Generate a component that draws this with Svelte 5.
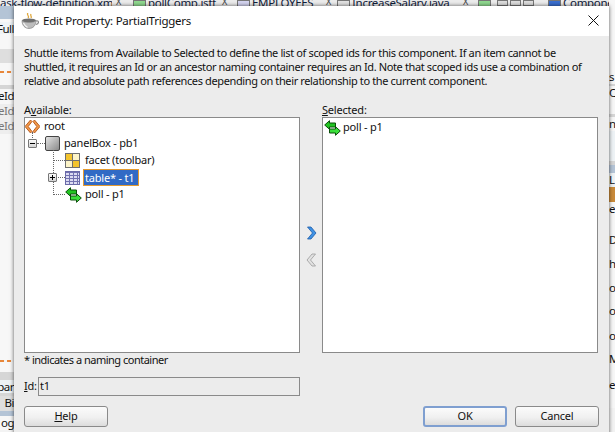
<script>
  const leftRows = [
    { h: 6, c: 'plain' }, { h: 13, c: 'steel' }, { h: 3, c: 'white' },
    { h: 12, c: 'pale', t: 'Full' }, { h: 15, c: 'white' },
    { h: 14, c: 'boxed' }, { h: 8, c: 'white' }, { h: 2, c: 'dash' },
    { h: 12, c: 'white' }, { h: 4, c: 'rule' },
    { h: 15, c: 'white', t: 'eId' }, { h: 15, c: 'fade', t: 'eId' }, { h: 15, c: 'fade', t: 'eId' },
    { h: 226, c: 'white' }, { h: 2, c: 'dash' }, { h: 10, c: 'white' },
    { h: 8, c: 'rule' }, { h: 13, c: 'pale', t: 'par' }, { h: 3, c: 'rule' },
    { h: 15, c: 'boxed', t: 'Bi' }, { h: 5, c: 'steel' }, { h: 14, c: 'white', t: 'og' }
  ];
  const rightRows = [
    { h: 70, c: 'white' }, { h: 14, c: 'white', t: 's' }, { h: 2, c: 'rule' }, { h: 14, c: 'white', t: 'C' },
    { h: 14, c: 'white' }, { h: 3, c: 'rule' }, { h: 14, c: 'white', t: 'ns' }, { h: 30, c: 'pale' },
    { h: 4, c: 'rule' }, { h: 8, c: 'steel' }, { h: 14, c: 'pale', t: 'L' }, { h: 15, c: 'orange' },
    { h: 12, c: 'white', t: 'e:' }, { h: 19, c: 'white' }, { h: 14, c: 'white', t: 'De' }, { h: 10, c: 'white' },
    { h: 14, c: 'white', t: 'h' }, { h: 10, c: 'white' }, { h: 14, c: 'white', t: 'ov' }, { h: 9, c: 'white' },
    { h: 14, c: 'white', t: 'ov' }, { h: 11, c: 'white' }, { h: 14, c: 'white', t: 'oc' }, { h: 9, c: 'white' },
    { h: 14, c: 'white', t: 'Me' }, { h: 12, c: 'white' }, { h: 14, c: 'white', t: 'e' }, { h: 16, c: 'white' }
  ];
</script>

<div class="screen">
  <div class="backdrop">
    <div class="tabs">
      <span class="tab w1">ask-flow-definition.xml</span><span class="x w1x">X</span>
      <span class="tab w2"><i class="chip green"></i>pollComp.jsff</span><span class="x w2x">X</span>
      <span class="tab w3"><i class="chip violet"></i>EMPLOYEES</span><span class="x w3x">X</span>
      <span class="tab w4"><i class="chip grey"></i>IncreaseSalary.java</span><span class="x w4x">X</span>
      <span class="tab w5"><i class="chip green"></i></span>
      <span class="navs"><i></i><i></i><i></i></span>
      <span class="tab w6"><i class="chip blue"></i>Componen</span>
    </div>
    <div class="lower">
      <div class="strip left">
        {#each leftRows as r}
          <div class="row {r.c}" style:height="{r.h}px">{r.t ?? ''}</div>
        {/each}
      </div>
      <div class="strip right">
        {#each rightRows as r}
          <div class="row {r.c}" style:height="{r.h}px">{r.t ?? ''}</div>
        {/each}
      </div>
    </div>
  </div>

  <div class="dialog">
    <header class="title">
      <svg class="cup" width="18" height="16" viewBox="0 0 18 16">
        <path d="M7 0c-2 2 2 3 0 5M10 1c-1 1.500 1 2.500 0 4" fill="none" stroke="#e0a93f" stroke-width="1.300"/>
        <ellipse cx="8" cy="7.500" rx="7" ry="2" fill="#6f6f6f"/>
        <path d="M1 7.500c0 5 3 8 7 8s7-3 7-8c-2 2.600-12 2.600-14 0z" fill="#bdbdbd" stroke="#777" stroke-width=".6"/>
        <path d="M2.500 10c1 2 2 3.500 4 4.300" stroke="#f2f2f2" stroke-width="1.300" fill="none"/>
        <path d="M15 8c3-1 3.500 2.500 0 3.500" fill="none" stroke="#888" stroke-width="1.200"/>
      </svg>
      <span class="title-text">Edit Property: PartialTriggers</span>
      <svg class="close" width="11" height="11" viewBox="0 0 11 11">
        <path d="M.5.500l10 10M10.500.500l-10 10" stroke="#111" stroke-width="1" fill="none"/>
      </svg>
    </header>

    <div class="body">
      <p class="intro">Shuttle items from Available to Selected to define the list of scoped ids for this component. If an item cannot be<br />shuttled, it requires an Id or an ancestor naming container requires an Id. Note that scoped ids use a combination of<br />relative and absolute path references depending on their relationship to the current component.</p>

      <div class="shuttle">
        <div class="column">
          <div class="cap">A<u>v</u>ailable:</div>
          <div class="list tree">
            <div class="node n0">
              <svg width="15" height="13" viewBox="0 0 15 13"><path d="M5.500 0L0 6.500 5.500 13 7 11.500 3.200 6.500 7 1.500zM9.500 0L15 6.500 9.500 13 8 11.500l3.800-5L8 1.500z" fill="#f09a4a" stroke="#b4541a" stroke-width=".9"/></svg>
              <span class="lbl">root</span>
            </div>
            <div class="node n1">
              <span class="h-dots d1"></span>
              <span class="expander">
                <svg width="7" height="7" viewBox="0 0 7 7"><path d="M1 3.500h5" stroke="#000"/></svg>
              </span>
              <span class="box-icon"></span>
              <span class="lbl">panelBox - pb1</span>
            </div>
            <div class="node n2">
              <span class="h-dots d2"></span>
              <span class="facet-icon"><i></i><i></i><i></i><i></i></span>
              <span class="lbl">facet (toolbar)</span>
            </div>
            <div class="node n2">
              <span class="expander plus">
                <svg width="7" height="7" viewBox="0 0 7 7"><path d="M1 3.500h5M3.500 1v5" stroke="#000"/></svg>
              </span>
              <span class="h-dots d3"></span>
              <span class="table-icon"></span>
              <span class="sel">table* - t1</span>
            </div>
            <div class="node n2 poll">
              <span class="h-dots d2"></span>
              <svg width="17" height="16" viewBox="0 0 17 16"><path d="M.7 5L5.500.7v2.300h6v4h-6v2.300z" fill="#22c422" stroke="#0b4f0b" stroke-width="1"/><path d="M16.300 11l-4.800-4.300V9h-6v4h6v2.300z" fill="#3ae03a" stroke="#0b4f0b" stroke-width="1"/></svg>
              <span class="lbl">poll - p1</span>
            </div>
            <span class="vline v1"></span>
            <span class="vline v2"></span>
          </div>
          <div class="note">* indicates a naming container</div>
          <div class="id-row">
            <div class="id-label"><u>I</u>d:</div>
            <div class="id-field">t1</div>
          </div>
        </div>

        <div class="arrows">
          <svg width="11" height="14" viewBox="0 0 11 14"><path d="M1.500 1h3.500l5 6-5 6H1.500l5-6z" fill="#3f92e4" stroke="#1c5aa8" stroke-width=".8"/></svg>
          <svg width="11" height="14" viewBox="0 0 11 14"><path d="M9.500 1H6L1 7l5 6h3.500l-5-6z" fill="#e2e2e2" stroke="#9c9c9c" stroke-width=".8"/></svg>
        </div>

        <div class="column">
          <div class="cap"><u>S</u>elected:</div>
          <div class="list selected">
            <div class="node picked">
              <svg width="17" height="16" viewBox="0 0 17 16"><path d="M.7 5L5.500.7v2.300h6v4h-6v2.300z" fill="#22c422" stroke="#0b4f0b" stroke-width="1"/><path d="M16.300 11l-4.800-4.300V9h-6v4h6v2.300z" fill="#3ae03a" stroke="#0b4f0b" stroke-width="1"/></svg>
              <span class="lbl">poll - p1</span>
            </div>
          </div>
        </div>
      </div>

      <footer class="buttons">
        <button class="btn"><u>H</u>elp</button>
        <span class="spacer"></span>
        <button class="btn ok">OK</button>
        <button class="btn">Cancel</button>
      </footer>
    </div>
  </div>
</div>

<style>
  :global(body) {
    margin: 0;
  }
  .screen {
    position: relative;
    width: 615px;
    height: 432px;
    overflow: hidden;
    background: #f3f3f3;
    font-family: "Noto Sans", "DejaVu Sans", sans-serif;
    font-size: 11px;
    letter-spacing: -0.2px;
    color: #111;
  }
  .backdrop {
    display: flex;
    flex-direction: column;
    height: 432px;
  }
  .tabs {
    flex: none;
    height: 12px;
    overflow: hidden;
    display: flex;
    align-items: flex-start;
    background: #ececec;
    color: #10203a;
    font-size: 11.500px;
    line-height: 12px;
    white-space: nowrap;
    letter-spacing: -0.3px;
  }
  .tab {
    display: flex;
    align-items: flex-start;
    gap: 2px;
    margin-top: -3px;
    flex: none;
    overflow: hidden;
  }
  .x {
    flex: none;
    box-sizing: border-box;
    padding-left: 4px;
    margin-top: -4px;
    font-size: 9px;
    color: #444;
  }
  .chip {
    display: block;
    flex: none;
    width: 13px;
    height: 12px;
    margin-top: 3px;
    border: 1px solid #777;
    box-sizing: border-box;
  }
  .chip.green { background: #8fd98f; }
  .chip.violet { background: #d4d4f0; }
  .chip.grey { background: #e2e2e2; }
  .chip.blue { background: #3a6fd0; }
  .w1 { width: 112px; }
  .w1x { width: 21px; }
  .w2 { width: 85px; }
  .w2x { width: 19px; }
  .w3 { width: 85px; }
  .w3x { width: 15px; }
  .w4 { width: 122px; }
  .w4x { width: 19px; }
  .w5 { width: 19px; }
  .navs {
    display: flex;
    gap: 2px;
    width: 51px;
    flex: none;
  }
  .navs i {
    display: block;
    width: 11px;
    height: 6px;
    background: #ddd;
    border: 1px solid #777;
    box-sizing: border-box;
  }
  .w6 { width: 70px; }
  .lower {
    flex: 1;
    display: flex;
    justify-content: space-between;
    margin-top: -12px;
    min-height: 0;
  }
  .strip {
    flex: none;
    font-size: 11.500px;
    letter-spacing: -0.5px;
    overflow: hidden;
  }
  .strip.left {
    width: 14px;
  }
  .strip.right {
    width: 6px;
  }
  .row {
    line-height: 13px;
    white-space: nowrap;
    overflow: hidden;
  }
  .strip.left .row {
    display: flex;
    justify-content: flex-end;
  }
  .plain { background: transparent; }
  .white { background: #f7f7f7; }
  .pale { background: #eef3f6; }
  .steel { background: #b4c4d6; }
  .rule { background: #d6d6d6; }
  .orange { background: #c98a3a; }
  .boxed { background: #dedede; }
  .fade { background: #eee; color: #777; }
  .dash {
    background: repeating-linear-gradient(90deg, #e8873a 0 4px, transparent 4px 7px);
  }

  .dialog {
    position: absolute;
    left: 14px;
    top: 6px;
    width: 595px;
    height: 432px;
    background: #ececec;
    display: flex;
    flex-direction: column;
    box-shadow: 0 0 4px rgba(0, 0, 0, 0.65);
  }
  .title {
    height: 30px;
    flex: none;
    background: #fff;
    display: flex;
    align-items: center;
    padding: 0 10px 0 7px;
    gap: 4px;
    box-sizing: border-box;
  }
  .title-text {
    font-size: 11.500px;
    letter-spacing: -0.25px;
    flex: 1;
    padding-bottom: 2px;
  }
  .close {
    margin-bottom: 2px;
  }
  .cup {
    margin-bottom: 1px;
  }
  .body {
    flex: 1;
    padding: 10px 10px 0;
    display: flex;
    flex-direction: column;
    min-height: 0;
  }
  .intro {
    margin: 0;
    line-height: 14px;
    white-space: nowrap;
    height: 46px;
    letter-spacing: -0.37px;
  }
  .shuttle {
    display: flex;
    height: 292px;
    margin-top: 12px;
  }
  .column {
    width: 276px;
    display: flex;
    flex-direction: column;
  }
  .cap {
    height: 13px;
    line-height: 11px;
  }
  .list {
    position: relative;
    height: 236px;
    background: #fff;
    border: 1px solid #8a8a8a;
    box-sizing: border-box;
    flex: none;
  }
  .node {
    position: relative;
    display: flex;
    align-items: center;
    height: 17px;
    gap: 4px;
    white-space: nowrap;
  }
  .lbl {
    padding-bottom: 2px;
  }
  .n1 { padding-left: 20px; }
  .n2 { padding-left: 40px; gap: 5px; }
  .poll { gap: 3px; }
  .picked { padding-left: 1px; gap: 2px; margin-top: 1px; }
  .vline {
    position: absolute;
    border-left: 1px dotted #666;
  }
  .v1 { left: 7px; top: 14px; height: 6px; }
  .v2 { left: 28px; top: 32px; height: 45px; }
  .h-dots {
    position: absolute;
    top: 8px;
    border-top: 1px dotted #666;
  }
  .d1 { left: 12px; width: 8px; }
  .d2 { left: 28px; width: 12px; }
  .d3 { left: 33px; width: 7px; }
  .expander {
    position: absolute;
    left: 3px;
    top: 4px;
    width: 9px;
    height: 9px;
    box-sizing: border-box;
    border: 1px solid #777;
    border-radius: 1px;
    background: linear-gradient(#fafafa, #d4d4d4);
    display: flex;
    z-index: 1;
  }
  .plus {
    left: 23px;
  }
  .box-icon {
    width: 15px;
    height: 15px;
    background: linear-gradient(135deg, #e4e4e4, #8a8a8a);
    border: 1px solid #444;
    box-sizing: border-box;
    border-radius: 2px;
  }
  .facet-icon {
    width: 15px;
    height: 15px;
    display: grid;
    grid-template-columns: 1fr 1fr;
    gap: 1px;
    background: #6f6f6f;
    padding: 1px;
    box-sizing: border-box;
  }
  .facet-icon i:nth-child(1), .facet-icon i:nth-child(4) { background: #f3c42e; }
  .facet-icon i:nth-child(2), .facet-icon i:nth-child(3) { background: #fdf4c8; }
  .table-icon {
    width: 15px;
    height: 14px;
    background:
      repeating-linear-gradient(90deg, transparent 0 3px, #7272b0 3px 4px),
      repeating-linear-gradient(0deg, #dcdcf2 0 2px, #7272b0 2px 3px);
    border: 1px solid #6a6aa8;
    box-sizing: border-box;
  }
  .sel {
    background: #316ac5;
    color: #fff;
    outline: 1px solid #e59b2f;
    padding: 0 1px;
    line-height: 15px;
    height: 15px;
    width: 52px;
    margin-left: -1px;
  }
  .note {
    height: 15px;
    line-height: 13px;
    letter-spacing: -0.5px;
  }
  .id-row {
    display: flex;
    align-items: center;
    margin-top: 9px;
  }
  .id-label {
    width: 14px;
    flex: none;
    padding-bottom: 2px;
  }
  .id-field {
    width: 262px;
    height: 19px;
    line-height: 15px;
    border: 1px solid #8a8a8a;
    box-sizing: border-box;
    padding-left: 1px;
  }
  .arrows {
    width: 22px;
    display: flex;
    flex-direction: column;
    align-items: center;
    padding-top: 122px;
    gap: 13px;
  }
  .buttons {
    display: flex;
    gap: 8px;
    margin-top: 10px;
  }
  .spacer { flex: 1; }
  .btn {
    width: 84px;
    height: 21px;
    box-sizing: border-box;
    border: 1px solid #8a8a8a;
    border-radius: 3px;
    background: linear-gradient(#fbfbfb, #f0f0f0 55%, #dcdcdc);
    font: inherit;
    letter-spacing: inherit;
    color: #111;
    padding: 0 0 2px;
  }
  .ok {
    border: 2px solid #7f9fd0;
  }
</style>
